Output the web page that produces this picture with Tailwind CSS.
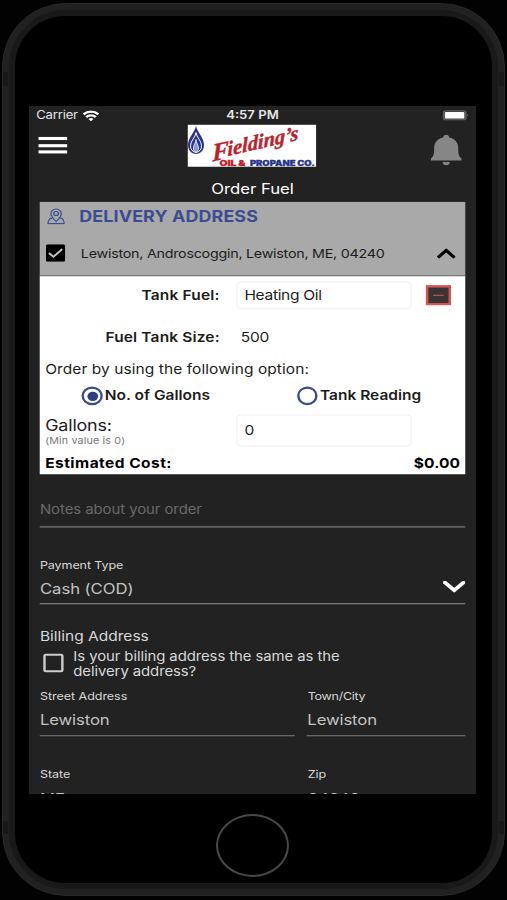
<!DOCTYPE html>
<html lang="en">
<head>
<meta charset="utf-8">
<title>Order Fuel</title>
<script src="https://cdn.jsdelivr.net/npm/@tailwindcss/browser@4"></script>
</head>
<body class="w-[507px] h-[900px] overflow-hidden bg-[#030202] pt-[3px] pl-[2px] font-[Inter,sans-serif]">
<!-- Phone body -->
<div class="relative w-[503px] h-[893px] rounded-[64px] bg-[#212121] border border-[#292929] p-[6px]">
  <div class="absolute left-0 top-[68px] w-[5px] h-[14px] bg-[#191919]"></div>
  <div class="absolute right-0 top-[68px] w-[5px] h-[14px] bg-[#191919]"></div>
  <div class="absolute left-0 top-[817px] w-[5px] h-[13px] bg-[#191919]"></div>
  <div class="absolute right-0 top-[817px] w-[5px] h-[13px] bg-[#191919]"></div>
  <div class="w-full h-full rounded-[57px] bg-[#191919] p-[6px]">
    <div class="w-full h-full rounded-[50px] bg-black pt-[89.5px] pl-[13.5px]">
      <div class="w-[447px] h-[688px]">
        <!-- 375x667 screen stretched to the phone's glass -->
        <div class="w-[375px] h-[667px] overflow-hidden origin-top-left scale-x-[1.192] scale-y-[1.0315] bg-[#222222] text-[#d8d8d8] whitespace-nowrap">
          <!-- Status bar -->
          <div class="h-[18px] pt-px grid grid-cols-3 items-center pl-[6px] pr-[6px] text-[11px] text-[#e6e6e6]">
            <div class="flex items-center gap-[4px]">
              <span class="tracking-[-0.150px]">Carrier</span>
              <svg class="w-[14px] h-[11px] -mt-px" viewBox="0 0 14 11" fill="none" stroke="#fff" stroke-width="2.200"><path d="M.8 4.100a8.800 8.800 0 0 1 12.400 0"/><path d="M3 6.800a5.600 5.600 0 0 1 8 0"/><path d="M7 10.800 4.900 8.600a3 3 0 0 1 4.200 0Z" fill="#fff" stroke="none"/></svg>
            </div>
            <div class="text-center font-semibold">4:57 PM</div>
            <div class="flex justify-end">
              <svg class="w-[22px] h-[10px] -mt-px" viewBox="0 0 23 11" preserveAspectRatio="none"><rect x=".5" y=".5" width="20" height="10" rx="2.500" fill="#484848" stroke="#686868"/><rect x="2" y="2" width="17" height="7" rx="1" fill="#fff"/><path d="M21.500 3.800q1.500 1.700 0 3.400z" fill="#686868"/></svg>
            </div>
          </div>
          <!-- App bar -->
          <div class="h-[41.500px] flex justify-between pl-[8.400px] pr-[12px]">
            <div class="pt-[12px] flex flex-col gap-[3.700px] w-[24px]">
              <div class="h-[3px] bg-white"></div><div class="h-[3px] bg-white"></div><div class="h-[3px] bg-white"></div>
            </div>
            <svg class="w-[108px] h-[41.500px] ml-[5.500px] -mt-[.5px]" viewBox="0 0 129 43" preserveAspectRatio="none">
              <rect width="129" height="43" fill="#fff"/>
              <path d="M8.500 1C8 7 .5 13 .5 20.500C.5 26 4 29.500 8.500 29.500S16.500 26 16.500 20.500C16.500 13 9 7 8.500 1Z" fill="#27338f"/>
              <path d="M8.500 8C8 13 3 16 3 21.500C3 25 5 27.500 8.500 28C12 27.500 14 25 14 21.500C14 16 9 13 8.500 8Z" fill="none" stroke="#fff" stroke-width="1"/>
              <path d="M8.500 15C8.500 18 6 20 6 23.500S7 27 8.500 27.500C10 27 11 26 11 23.500S8.500 18 8.500 15Z" fill="#8a95cc" stroke="#fff" stroke-width=".8"/>
              <g transform="translate(25 35.500) rotate(-13) skewX(-12)" fill="#bd1f2d" stroke="#bd1f2d" stroke-width=".4" font-family="Liberation Serif,serif" font-style="italic" font-weight="700">
                <text x="0" y="1.500" font-size="25" textLength="17" lengthAdjust="spacingAndGlyphs">F</text>
                <text x="15.500" y="-.5" font-size="20.500" textLength="73" lengthAdjust="spacingAndGlyphs">ielding’s</text>
              </g>
              <g font-family="Inter,sans-serif" font-weight="900" font-size="7.500">
                <text x="32" y="41.500" fill="#bd1f2d" stroke="#bd1f2d" stroke-width=".3" textLength="26" lengthAdjust="spacingAndGlyphs">OIL &amp;</text>
                <text x="62.500" y="41.500" fill="#27338f" stroke="#27338f" stroke-width=".3" textLength="65" lengthAdjust="spacingAndGlyphs">PROPANE CO.</text>
              </g>
            </svg>
            <svg class="w-[26px] h-[29.500px] mt-[10px]" viewBox="0 0 26 29.500" fill="#868686"><path d="M13 0c1.500 0 2.500 1 2.500 2.600 4.600 1.200 7.600 4.700 7.600 9.800 0 6 .2 8 2.900 10.600v1.800H0V23c2.700-2.600 2.900-4.600 2.900-10.600 0-5.100 3-8.600 7.600-9.800C10.500 1 11.500 0 13 0Z"/><path d="M10 26.300h6c0 2-1.300 3.200-3 3.200s-3-1.200-3-3.200Z"/></svg>
          </div>
          <div class="h-[33px] pt-[7px] flex items-center justify-center text-[14px] text-white"><span>Order Fuel</span></div>
          <!-- Delivery card -->
          <div class="mx-[9px] w-[357.400px] text-[#1c1c1c]">
            <div class="h-[72px] bg-[#a9a9a9] border-b border-[#6f6f6f]">
              <div class="h-[28px] pt-[1.500px] flex items-center pl-[5.500px] gap-[12.200px]">
                <svg class="w-[15.500px] h-[16px] -mt-[1.500px]" viewBox="0 0 16 16" fill="none" stroke="#3c4c92" stroke-width="1.100"><path d="M8 13.200C5.500 10.200 3.500 8 3.500 5.300a4.500 4.700 0 0 1 9 0C12.500 8 10.500 10.200 8 13.200Z"/><circle cx="8" cy="5.200" r="2"/><path d="M4.500 10H3.500Q2.500 10 2.200 11L.9 14.300Q.7 15.300 1.700 15.300h12.600Q15.300 15.300 15.100 14.300L13.800 11Q13.500 10 12.500 10H11.500"/></svg>
                <span class="text-[15px] font-bold tracking-[0.100px] text-[#3c4c92]">DELIVERY ADDRESS</span>
              </div>
              <div class="h-[43px] pt-[1px] flex items-center pl-[5px]">
                <svg class="w-[16.500px] h-[17px]" viewBox="0 0 16 17"><rect width="16" height="17" rx="1.500" fill="#000"/><path d="M2.500 8.500l3.700 3.700 7.400-7.400" fill="none" stroke="#c4c4c4" stroke-width="1.800"/></svg>
                <span class="ml-[13px] text-[12px] tracking-[-0.215px]">Lewiston, Androscoggin, Lewiston, ME, 04240</span>
                <svg class="w-[16px] h-[10px] ml-auto mr-[8.500px]" viewBox="0 0 16 10" fill="none" stroke="#000" stroke-width="2.800"><path d="M1 9 8 2l7 7"/></svg>
              </div>
            </div>
            <div class="h-[192px] bg-white text-[13px]">
              <div class="h-[37.500px] flex items-center">
                <span class="w-[151px] text-right font-semibold tracking-[0.150px]">Tank Fuel:</span>
                <div class="ml-[13.700px] w-[147px] h-[27.500px] border border-[#f1f1f1] rounded-[4px] flex items-center pl-[6px] tracking-[-0.250px]">Heating Oil</div>
                <div class="ml-[12px] w-[21.500px] h-[18.500px] border-2 border-[#e2504f] bg-[#363636] flex items-center justify-center"><div class="w-[9px] h-[1.500px] bg-[#e2504f]"></div></div>
              </div>
              <div class="h-[43px] pt-[1.500px] flex items-center">
                <span class="w-[151px] text-right font-semibold tracking-[0.120px]">Fuel Tank Size:</span>
                <span class="ml-[17.700px] tracking-[-0.200px]">500</span>
              </div>
              <div class="h-[19px] pt-[1.500px] flex items-center pl-[4.600px] tracking-[0.060px]"><span>Order by using the following option:</span></div>
              <div class="h-[33px] pt-[1.200px] flex items-center pl-[35.300px] font-semibold">
                <div class="w-[17.500px] h-[17.500px] rounded-full border-2 border-[#3b4c8e] flex items-center justify-center"><div class="w-[9px] h-[9px] rounded-full bg-[#2f4080]"></div></div>
                <span class="ml-[1.800px] w-[161px]">No. of Gallons</span>
                <div class="w-[17.500px] h-[17.500px] rounded-full border-2 border-[#3b4c8e]"></div>
                <span class="ml-[2px]">Tank Reading</span>
              </div>
              <div class="h-[39.500px] flex">
                <div class="w-[164.700px] pl-[4.600px] pt-[2.500px]">
                  <div class="h-[19px] leading-[19px] text-[15px] tracking-[-0.150px]"><span>Gallons:</span></div>
                  <div class="h-[11px] leading-[11px] text-[9px] tracking-[0.120px] text-[#777]"><span>(Min value is 0)</span></div>
                </div>
                <div class="mt-[2.200px] w-[147px] h-[30.500px] border border-[#f1f1f1] rounded-[4px] flex items-center pl-[6px]">0</div>
              </div>
              <div class="h-[20px] pt-[1px] flex items-center justify-between pl-[4.600px] pr-[4.700px] font-bold text-black"><span class="tracking-[0.390px]">Estimated Cost:</span><span class="tracking-[0.100px]">$0.00</span></div>
            </div>
          </div>
          <!-- Notes and payment -->
          <div class="pl-[9.200px] pr-[8.700px]">
            <div class="h-[52px] pt-[21.500px] border-b-2 border-[#5c5c5c] flex items-center text-[12.500px] tracking-[-0.050px] text-[#696969]"><span>Notes about your order</span></div>
            <div class="mt-[28px] h-[18px] flex items-center text-[10.500px] tracking-[-0.080px]"><span>Payment Type</span></div>
            <div class="h-[28.500px] flex items-center justify-between border-b border-[#8c8c8c] text-[14px] text-[#c2c2c2]">
              <span class="-mt-[2px] tracking-[-0.050px]">Cash (COD)</span>
              <svg class="w-[19.500px] h-[12px] -mt-[4px]" viewBox="0 0 20 12" fill="none" stroke="#fff" stroke-width="3.500" stroke-linecap="round" preserveAspectRatio="none"><path d="M2 2l8 7.500 8-7.500"/></svg>
            </div>
            <div class="mt-[22.500px] h-[18px] flex items-center text-[13px]"><span>Billing Address</span></div>
            <div class="h-[32px] mt-[.5px] flex items-center pl-[2.500px] text-[12.500px] leading-[15px] tracking-[-0.070px]">
              <div class="w-[17.500px] h-[18px] -mt-px border-2 border-[#cdcdcd] rounded-[2px]"></div>
              <div class="ml-[8px] mt-[1.500px]"><span>Is your billing address the same as the<br>delivery address?</span></div>
            </div>
            <div class="mt-[7.500px] grid grid-cols-[213.800px_133.200px] gap-x-[10px] text-[10.500px] tracking-[-0.030px]">
              <div class="h-[18px] flex items-center"><span>Street Address</span></div>
              <div class="h-[18px] flex items-center pl-[.8px] tracking-[-0.220px]"><span>Town/City</span></div>
              <div class="h-[29px] pb-[1.500px] border-b border-[#7c7c7c] flex items-center text-[14px] text-[#c2c2c2] tracking-[-0.100px]"><span>Lewiston</span></div>
              <div class="h-[29px] pb-[1.500px] border-b border-[#7c7c7c] flex items-center pl-[.5px] text-[14px] text-[#c2c2c2] tracking-[-0.100px]"><span>Lewiston</span></div>
              <div class="mt-[28px] h-[18px] flex items-center"><span>State</span></div>
              <div class="mt-[28px] h-[18px] flex items-center pl-[.8px]"><span>Zip</span></div>
              <div class="h-[29px] flex items-center text-[14px] text-[#c2c2c2]"><span>ME</span></div>
              <div class="h-[29px] flex items-center pl-[.8px] text-[14px] text-[#c2c2c2]"><span>04240</span></div>
            </div>
          </div>
        </div>
      </div>
      <div class="mt-[20px] ml-[187.500px] w-[73px] h-[63px] rounded-[50%] border-2 border-[#484848]"></div>
    </div>
  </div>
</div>
</body>
</html>
